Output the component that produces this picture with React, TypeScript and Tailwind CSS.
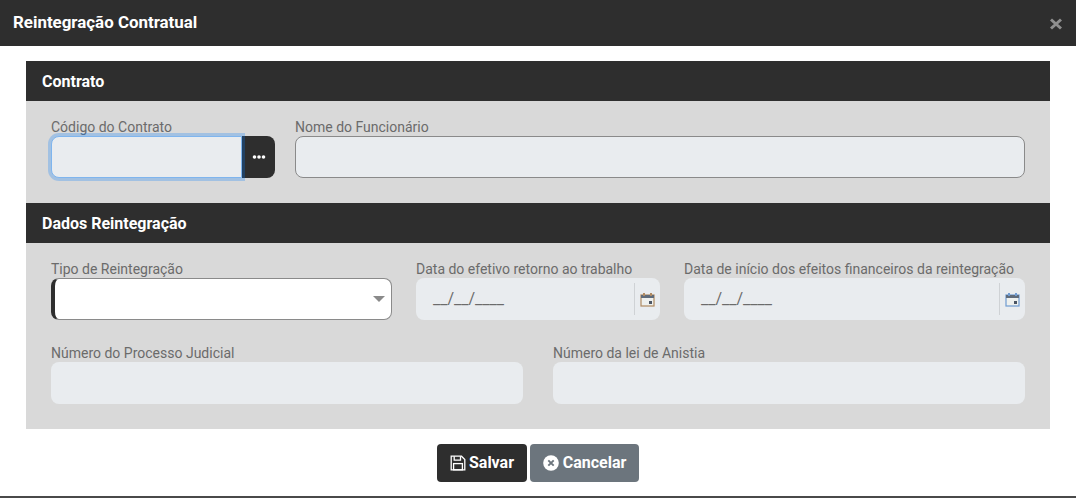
import React from 'react';

const labelCls = 'block h-[19px] text-[14px] leading-[21px] text-[#6b6b6b] whitespace-nowrap';
const readonlyCls = 'h-[42px] rounded-lg bg-[#e9ecef]';

function SectionHeader({ title }: { title: string }) {
  return (
    <div className="h-10 bg-[#2e2e2e] pl-4 text-[16px] font-bold leading-[41px] text-white">{title}</div>
  );
}

function CalendarIcon({ tint }: { tint: string }) {
  return (
    <svg width="15" height="15" viewBox="0 0 15 15">
      <rect x="1" y="3" width="13" height="11" fill="#eef0ee" stroke={tint} strokeWidth="1.2" />
      <rect x="1" y="3" width="13" height="3" fill="#5f6b7a" />
      <rect x="3" y="1" width="2" height="3" fill={tint} />
      <rect x="10" y="1" width="2" height="3" fill={tint} />
      <rect x="9" y="9" width="3" height="3" fill="#4b5563" />
    </svg>
  );
}

function DateField({ label, className, tint }: { label: string; className: string; tint: string }) {
  return (
    <div className={className}>
      <label className={labelCls}>{label}</label>
      <div className={`${readonlyCls} flex items-center pl-[17px] pr-[5px]`}>
        <span className="flex-1 text-[16px] text-[#6b6b6b]">__/__/____</span>
        <div className="flex h-[32px] items-center border-l border-[#cfd2d5] pl-[5px]">
          <CalendarIcon tint={tint} />
        </div>
      </div>
    </div>
  );
}

export default function App() {
  return (
    <div className="relative h-[498px] w-[1076px] overflow-hidden bg-white font-['Roboto',sans-serif]">
      <div className="flex h-[46px] items-center justify-between bg-[#2e2e2e] pl-[13px] pr-[14px]">
        <h1 className="-mt-[1px] text-[16.9px] font-bold text-white">Reintegração Contratual</h1>
        <svg width="12" height="12" viewBox="0 0 12 12" className="mt-[2px]">
          <path d="M1 1.5 L11 10.5 M11 1.5 L1 10.5" stroke="#8f8f8f" strokeWidth="3" />
        </svg>
      </div>

      <div className="mx-[26px] mt-[15px] bg-[#d9d9d9]">
        <SectionHeader title="Contrato" />
        <div className="flex gap-5 px-[25px] pb-[25px] pt-4">
          <div className="w-[224px]">
            <label className={labelCls}>Código do Contrato</label>
            <div className="flex h-[42px]">
              {/* the focus ring falls over the button, which is what gives the navy strip */}
              <div className="relative z-10 w-[191px] rounded-l-lg border border-[#7fb5ee] bg-[#e9ecef] shadow-[0_0_0_3px_rgba(0,123,255,0.25)]" />
              <button className="flex flex-1 items-center justify-center rounded-r-lg bg-[#2e2e2e] pl-[1px]">
                <svg width="14" height="4" viewBox="0 0 14 4">
                  <circle cx="2.5" cy="2" r="1.8" fill="#fff" />
                  <circle cx="7" cy="2" r="1.8" fill="#fff" />
                  <circle cx="11.5" cy="2" r="1.8" fill="#fff" />
                </svg>
              </button>
            </div>
          </div>
          <div className="flex-1">
            <label className={labelCls}>Nome do Funcionário</label>
            <div className={`${readonlyCls} border border-[#8a8a8a]`} />
          </div>
        </div>

        <SectionHeader title="Dados Reintegração" />
        <div className="px-[25px] pb-[25px] pt-4">
          <div className="flex gap-6">
            <div className="w-[341px]">
              <label className={labelCls}>Tipo de Reintegração</label>
              <div className="flex h-[42px] items-center justify-end rounded-lg border border-l-[4px] border-[#8a8a8a] border-l-[#2e2e2e] bg-white pr-[6px]">
                <div className="h-0 w-0 border-x-[6px] border-t-[6px] border-x-transparent border-t-[#8a8a8a]" />
              </div>
            </div>
            <DateField label="Data do efetivo retorno ao trabalho" className="w-[244px]" tint="#b08a62" />
            <DateField label="Data de início dos efeitos financeiros da reintegração" className="w-[341px]" tint="#6f9bd1" />
          </div>
          <div className="mt-[23px] flex gap-[30px]">
            <div className="flex-1">
              <label className={labelCls}>Número do Processo Judicial</label>
              <div className={readonlyCls} />
            </div>
            <div className="flex-1">
              <label className={labelCls}>Número da lei de Anistia</label>
              <div className={readonlyCls} />
            </div>
          </div>
        </div>
      </div>

      <div className="mt-[15px] flex justify-center gap-[3px]">
        <button className="flex h-[38px] w-[90px] items-center justify-center gap-[3px] rounded bg-[#2e2e2e] text-[16px] font-bold text-white">
          <svg width="16" height="16" viewBox="0 0 16 16" fill="none" stroke="#fff" strokeWidth="1.3">
            <path d="M1.2 1.2 H11.5 L14.8 4.5 V14.8 H1.2 Z" />
            <path d="M4.2 1.2 V5.2 H10.5 V1.2" />
            <rect x="3.6" y="8.6" width="8.8" height="6.2" />
          </svg>
          Salvar
        </button>
        <button className="flex h-[38px] w-[109px] items-center justify-center gap-1 rounded bg-[#6c757d] text-[16px] font-bold text-white">
          <svg width="16" height="16" viewBox="0 0 16 16">
            <circle cx="8" cy="8" r="7.8" fill="#fff" />
            <path d="M5.3 5.3 L10.7 10.7 M10.7 5.3 L5.3 10.7" stroke="#6c757d" strokeWidth="1.9" />
          </svg>
          Cancelar
        </button>
      </div>

      <div className="absolute bottom-0 left-0 h-[2px] w-full bg-[#4a4a4a]" />
    </div>
  );
}
